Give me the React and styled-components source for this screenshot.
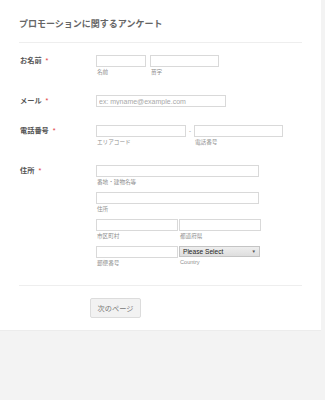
import React from "react";
import styled, { createGlobalStyle } from "styled-components";

const GlobalStyle = createGlobalStyle`
  html, body {
    margin: 0;
    padding: 0;
    background: #f3f3f3;
  }
  body {
    font-family: "Liberation Sans", "Noto Sans CJK JP", sans-serif;
  }
`;

const Page = styled.div`
  width: 325px;
  height: 400px;
  background: #f3f3f3;
`;

const Panel = styled.div`
  width: 321px;
  box-sizing: border-box;
  background: #ffffff;
  padding: 18px 19px 12px;
  border-bottom: 1px solid #ececec;
`;

const Title = styled.h1`
  margin: 0;
  font-size: 9px;
  line-height: 12px;
  font-weight: bold;
  color: #666;
  padding-bottom: 12px;
  border-bottom: 1px solid #eeeeee;
`;

const Rows = styled.div`
  display: flex;
  flex-direction: column;
  gap: 18px;
  padding: 12px 0 17px;
`;

const Row = styled.div`
  display: grid;
  grid-template-columns: 77px 1fr;
  align-items: start;
`;

const Label = styled.div`
  font-size: 7.2px;
  line-height: 12px;
  font-weight: bold;
  color: #555;
  padding-left: 1px;
`;

const Star = styled.span`
  color: #e04040;
  margin-left: 4px;
  font-weight: normal;
`;

const Fields = styled.div`
  display: flex;
  flex-direction: column;
  gap: 5px;
`;

const Line = styled.div`
  display: flex;
  align-items: flex-start;
  gap: ${(p) => p.$gap ?? 1}px;
`;

const Field = styled.div`
  display: flex;
  flex-direction: column;
  flex: none;
  width: ${(p) => p.$w}px;
`;

const Input = styled.input`
  box-sizing: border-box;
  width: 100%;
  height: 12px;
  margin: 0;
  padding: 0 2px;
  border: 1px solid #d9d9d9;
  border-radius: 0;
  background: #fff;
  font-family: "Liberation Sans", sans-serif;
  font-size: 7px;
  color: #555;
  outline: none;

  &::placeholder {
    color: #a8a8a8;
  }
`;

const Sub = styled.span`
  font-size: 5.6px;
  line-height: 10px;
  color: #8f8f8f;
  padding-left: 1px;
  white-space: nowrap;
`;

const Dash = styled.span`
  flex: 0 0 8px;
  text-align: center;
  font-size: 6px;
  line-height: 12px;
  color: #888;
`;

const Select = styled.div`
  box-sizing: border-box;
  width: 81px;
  height: 11px;
  display: flex;
  align-items: center;
  justify-content: space-between;
  padding: 0 3px;
  border: 1px solid #c4c4c4;
  background: linear-gradient(#eeeeee, #dedede);
  font-size: 6.6px;
  color: #222;
`;

const Arrow = styled.span`
  font-size: 4.5px;
  color: #555;
`;

const Footer = styled.div`
  border-top: 1px solid #eeeeee;
  padding-top: 11px;
  padding-left: 71px;
`;

const Button = styled.button`
  box-sizing: border-box;
  width: 51px;
  height: 20px;
  border: 1px solid #dcdcdc;
  border-radius: 2px;
  background: #f2f2f2;
  color: #777;
  font-family: "Liberation Sans", "Noto Sans CJK JP", sans-serif;
  font-size: 7.2px;
  padding: 0;
  cursor: pointer;
`;

const App = () => {
  return (
    <Page>
      <GlobalStyle />
      <Panel>
        <Title>プロモーションに関するアンケート</Title>
        <Rows>
          <Row>
            <Label>
              お名前<Star>*</Star>
            </Label>
            <Line $gap={4}>
              <Field $w={50}>
                <Input />
                <Sub>名前</Sub>
              </Field>
              <Field $w={69}>
                <Input />
                <Sub>苗字</Sub>
              </Field>
            </Line>
          </Row>
          <Row>
            <Label>
              メール<Star>*</Star>
            </Label>
            <Field $w={130}>
              <Input placeholder="ex: myname@example.com" />
            </Field>
          </Row>
          <Row>
            <Label>
              電話番号<Star>*</Star>
            </Label>
            <Line $gap={0}>
              <Field $w={90}>
                <Input />
                <Sub>エリアコード</Sub>
              </Field>
              <Dash>-</Dash>
              <Field $w={89}>
                <Input />
                <Sub>電話番号</Sub>
              </Field>
            </Line>
          </Row>
          <Row>
            <Label>
              住所<Star>*</Star>
            </Label>
            <Fields>
              <Field $w={163}>
                <Input />
                <Sub>番地・建物名等</Sub>
              </Field>
              <Field $w={163}>
                <Input />
                <Sub>住所</Sub>
              </Field>
              <Line>
                <Field $w={82}>
                  <Input />
                  <Sub>市区町村</Sub>
                </Field>
                <Field $w={82}>
                  <Input />
                  <Sub>都道府県</Sub>
                </Field>
              </Line>
              <Line>
                <Field $w={82}>
                  <Input />
                  <Sub>郵便番号</Sub>
                </Field>
                <Field $w={82}>
                  <Select>
                    Please Select<Arrow>▼</Arrow>
                  </Select>
                  <Sub>Country</Sub>
                </Field>
              </Line>
            </Fields>
          </Row>
        </Rows>
        <Footer>
          <Button>次のページ</Button>
        </Footer>
      </Panel>
    </Page>
  );
};

export default App;
